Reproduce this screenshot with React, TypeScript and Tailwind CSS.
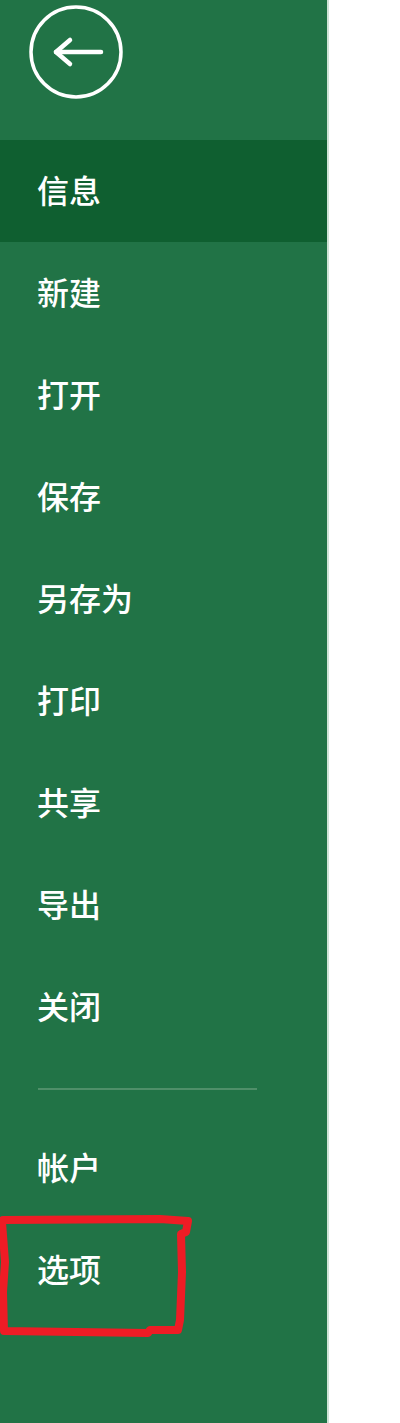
import { Fragment } from "react";

const MAIN_ITEMS = ["信息", "新建", "打开", "保存", "另存为", "打印", "共享", "导出", "关闭"];
const FOOT_ITEMS = ["帐户", "选项"];

function BackButton() {
  return (
    <svg width="96" height="96" viewBox="0 0 96 96" fill="none" className="block">
      <circle cx="48" cy="48" r="45" stroke="white" strokeWidth="3.5" />
      <path d="M28 48 H73" stroke="white" strokeWidth="4.5" strokeLinecap="round" />
      <path d="M42 36 L28 48 L42 60" stroke="white" strokeWidth="4.5" strokeLinecap="round" strokeLinejoin="round" />
    </svg>
  );
}

function MenuItem({ label, active }: { label: string; active?: boolean }) {
  return (
    <div className={`flex h-[102px] items-center pb-[5px] pl-[37px] text-[32px] font-medium leading-none text-white ${active ? "bg-[#0f5f30]" : ""}`}>
      {label}
    </div>
  );
}

export default function App() {
  return (
    <div
      className="flex h-[1423px] w-[400px] bg-white"
      style={{ fontFamily: '"Noto Sans CJK SC", "Noto Sans", sans-serif' }}
    >
      <aside className="relative flex h-full w-[329px] shrink-0 flex-col border-r-2 border-[#cfe3d6] bg-[#217346]">
        <div className="flex h-[140px] items-start pl-[28px] pt-[4px]">
          <BackButton />
        </div>
        {MAIN_ITEMS.map((label, i) => (
          <MenuItem key={label} label={label} active={i === 0} />
        ))}
        <div className="mt-[30px] mb-[27px] ml-[38px] h-[2px] w-[219px] bg-[#4f8f69]" />
        {FOOT_ITEMS.map((label) => (
          <Fragment key={label}>
            <MenuItem label={label} />
          </Fragment>
        ))}
        {/* hand-drawn highlight around 选项 */}
        <svg className="pointer-events-none absolute left-0 top-[1212px]" width="196" height="126" viewBox="0 0 196 126" fill="none">
          <path
            d="M3 8 L160 7 L188 9 L186 20 L181 22 L182 60 L180 108 L178 118 L150 118 L148 121 L4 119 L3 80 L5 50 L2 10"
            stroke="#ee1c25"
            strokeWidth="8"
            strokeLinejoin="round"
            strokeLinecap="round"
          />
        </svg>
      </aside>
      <main className="flex-1 bg-white" />
    </div>
  );
}
